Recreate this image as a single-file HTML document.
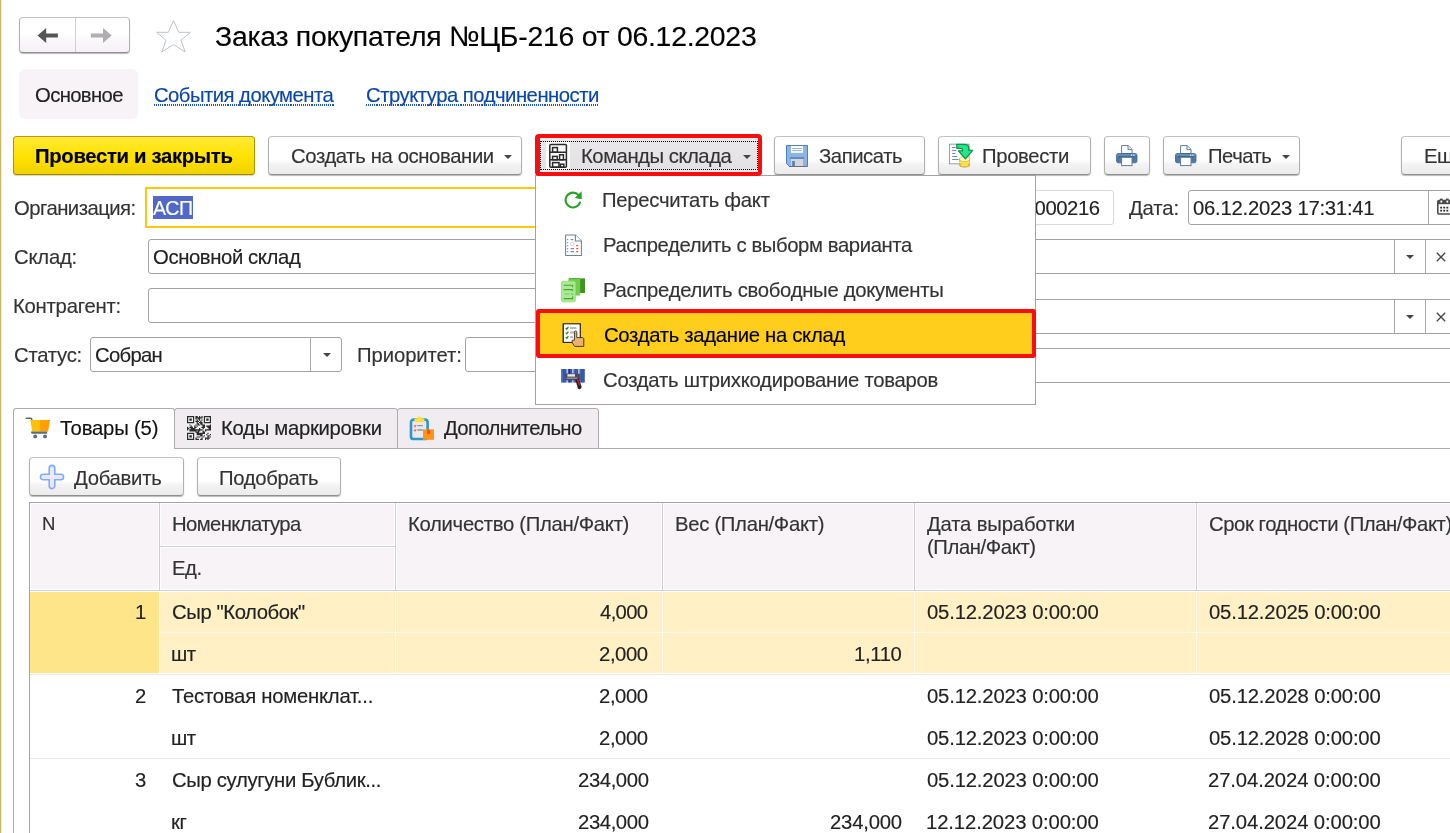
<!DOCTYPE html>
<html lang="ru">
<head>
<meta charset="utf-8">
<title>Заказ покупателя</title>
<style>
*{box-sizing:border-box;margin:0;padding:0}
html,body{width:1450px;height:833px;overflow:hidden;background:#fff}
body{font-family:"Liberation Sans",sans-serif;font-size:20.3px;color:#333;position:relative}
.abs{position:absolute}
.t{position:absolute;white-space:nowrap;line-height:24px;will-change:transform;-webkit-text-stroke:0.15px}
.btn{position:absolute;border:1px solid #b0b0b0;border-top-color:#c2c2c2;border-bottom-color:#8f8f8f;border-radius:4px;background:linear-gradient(#fff 0%,#fff 60%,#faf9fa 69%,#f5f3f5 71%,#ececec 100%);box-shadow:0 1px 1px rgba(0,0,0,.28);height:39px}
.inp{position:absolute;border:1px solid #a3a1a5;border-radius:3px;background:#fff}
.arr{position:absolute;width:0;height:0;border-left:4.2px solid transparent;border-right:4.2px solid transparent;border-top:4.8px solid #444}
.vl{position:absolute;width:1px;background:#a9a7ab}
</style>
</head>
<body>
<div class="abs" style="left:0;top:0;width:1px;height:833px;background:#c8b762"></div>
<div class="abs" style="left:1px;top:0;width:1px;height:833px;background:#f3eedb"></div>
<div class="btn" style="left:19px;top:17px;width:111px;height:36px;background:linear-gradient(#fff 0%,#fff 48%,#fbf9fb 60%,#f4f2f4 100%)"></div>
<div class="abs" style="left:75px;top:18px;width:1px;height:34px;background:#d0d0d0"></div>
<svg class="abs" style="left:36px;top:26px" width="24" height="20" viewBox="0 0 24 20"><path d="M1.5 9.5 L10.2 2 L10.2 7.5 L21.9 7.5 L21.9 11.5 L10.2 11.5 L10.2 17 Z" fill="#555"/></svg>
<svg class="abs" style="left:88.6px;top:26px" width="24" height="20" viewBox="0 0 24 20"><path d="M22.7 9.5 L14 2 L14 7.5 L1.8 7.5 L1.8 11.5 L14 11.5 L14 17 Z" fill="#b0aeb0"/></svg>
<svg class="abs" style="left:155px;top:19px" width="37" height="36" viewBox="0 0 37 36"><path d="M18.5 1.6 L23.7 13.3 L35.4 13.3 L26 21.3 L30.2 33 L18.5 25.6 L6.8 33 L11 21.3 L1.6 13.3 L13.3 13.3 Z" fill="#fff" stroke="#bcc3cd" stroke-width="1"/></svg>
<div class="t" style="left:215.1px;top:23.96px;letter-spacing:-0.26px;font-size:28.4px;color:#000">Заказ покупателя №ЦБ-216 от 06.12.2023</div>
<div class="abs" style="left:19px;top:69px;width:119px;height:50px;background:#f7f3f7;border-radius:6px"></div>
<div class="t" style="left:34.8px;top:82.67px;letter-spacing:-0.64px;color:#222">Основное</div>
<div class="t" style="left:154px;top:82.67px;letter-spacing:-0.53px;color:#0b47a8">События документа</div>
<div class="abs" style="left:154px;top:104.2px;width:181px;height:1.7px;background:repeating-linear-gradient(90deg,#1a52ae 0,#1a52ae 1.1px,transparent 1.1px,transparent 2.1px)"></div>
<div class="t" style="left:366px;top:82.67px;letter-spacing:-0.5px;color:#0b47a8">Структура подчиненности</div>
<div class="abs" style="left:366px;top:104.2px;width:233px;height:1.7px;background:repeating-linear-gradient(90deg,#1a52ae 0,#1a52ae 1.1px,transparent 1.1px,transparent 2.1px)"></div>
<div class="btn" style="left:13px;top:136px;width:242px;background:linear-gradient(#ffe938 0%,#ffe516 30%,#ffe200 55%,#f8da00 75%,#f1d300 100%);border-color:#ad9600;border-top-color:#b8a000;border-bottom-color:#9c8600;border-radius:3.5px;box-shadow:0 1px 1px rgba(90,80,0,.25)"></div>
<div class="t" style="left:34.5px;top:144.17px;letter-spacing:-0.32px;color:#000;font-weight:bold">Провести и закрыть</div>
<div class="btn" style="left:268px;top:136px;width:254px"></div>
<div class="t" style="left:290.6px;top:144.17px;letter-spacing:-0.38px">Создать на основании</div>
<div class="arr" style="left:503.5px;top:154.5px"></div>
<div class="abs" style="z-index:3;left:535px;top:133.6px;width:227px;height:42.2px;border:4px solid #fb0d0d;border-bottom-width:4.4px;border-left-width:5px;border-radius:4px;background:#e9eaec"></div>
<div class="abs" style="z-index:3;left:540px;top:140.8px;width:218px;height:29.4px;border:1.5px dotted #000;background:linear-gradient(#e9e7e9,#e3e1e3)"></div>
<div class="abs" style="z-index:3;left:546px;top:142px;width:24px;height:27px;background:#fbfbfb"></div>
<svg class="abs" style="z-index:4;left:548px;top:143px" width="20" height="26" viewBox="0 0 20 26"><g fill="none" stroke="#2b2b2b" stroke-width="1.5"><rect x="1.8" y="1.6" width="16.6" height="22.6" rx="1"/><path d="M1.8 9.2h16.6M1.8 16.8h16.6"/><rect x="4.6" y="4.6" width="4.8" height="4.6"/><rect x="4.6" y="13.4" width="4.6" height="3.4"/><rect x="11.6" y="11.8" width="3.8" height="5"/><rect x="4.6" y="19.6" width="6.4" height="4.6"/><rect x="12.4" y="21.2" width="3.4" height="3"/></g></svg>
<div class="t" style="left:580.7px;top:144.17px;letter-spacing:-0.48px;z-index:4">Команды склада</div>
<div class="arr" style="z-index:4;left:743px;top:155px"></div>
<div class="btn" style="left:774px;top:136px;width:151px"></div>
<div class="t" style="left:819px;top:144.17px;letter-spacing:-0.43px">Записать</div>
<svg class="abs" style="left:786px;top:145px" width="22" height="22" viewBox="0 0 22 22"><path d="M0.5 0.5h21v21h-18l-3-3z" fill="#8db4e3" stroke="#4f7fbd" stroke-width="1"/><rect x="5" y="1" width="12" height="6.8" fill="#fff"/><path d="M6.3 3.5h9.4M6.3 5.6h9.4" stroke="#8aa8cc" stroke-width="0.9"/><rect x="4" y="12" width="14" height="2" fill="#5f8cc4"/><rect x="5" y="14" width="12" height="7" fill="#d3d6d6"/><rect x="6.2" y="16" width="2.6" height="5" fill="#4f7fbd"/><path d="M3 21.5h18" stroke="#6b6b6b" stroke-width="0.8"/></svg>
<div class="btn" style="left:938px;top:136px;width:153px"></div>
<div class="t" style="left:982.4px;top:144.17px;letter-spacing:-0.34px">Провести</div>
<svg class="abs" style="left:948px;top:143px" width="27" height="26" viewBox="0 0 27 26"><rect x="1.5" y="1.2" width="19.5" height="19.6" fill="#fff" stroke="#8da0bd" stroke-width="1"/><path d="M4.2 4.5h3.6M4.2 7.5h4.2M4.2 10.5h3.2M4.2 13.5h5M4.2 16.5h6.4" stroke="#6f8ab8" stroke-width="1"/><ellipse cx="16.6" cy="22" rx="5.4" ry="2.6" fill="#c99a12"/><rect x="11.2" y="16" width="10.8" height="6" fill="#e3b21c"/><ellipse cx="16.6" cy="19.2" rx="5.4" ry="2.2" fill="#f8e24a"/><ellipse cx="16.6" cy="22.2" rx="4.2" ry="1.3" fill="#f8e24a"/><ellipse cx="16.6" cy="16" rx="5.4" ry="2.6" fill="#fff6c8" stroke="#d8aa18" stroke-width="0.6"/><path d="M8.8 1.4H16.4C19.4 1.4 20.8 3 20.8 5.4V7.4H24.6L17.4 15.8L10.4 7.9H14.4V6.9C14.4 5.8 13.9 5.3 12.8 5.3H8.8Z" fill="#20e88a" stroke="#149448" stroke-width="1.3" stroke-linejoin="round"/></svg>
<div class="btn" style="left:1104px;top:136px;width:46px"></div>
<svg class="abs" style="left:1116px;top:145px" width="22" height="22" viewBox="0 0 22 22"><path d="M5.6 8.5V0.6h6.6l3.8 3.8v4.1z" fill="#fff" stroke="#5f7c9c" stroke-width="1"/><path d="M12 0.8v3.8h3.8" fill="#e9eef4" stroke="#5f7c9c" stroke-width="1"/><rect x="0.5" y="8.5" width="20.5" height="9.3" rx="1.8" fill="#5079a3" stroke="#3f6690" stroke-width="0.8"/><rect x="1" y="8.9" width="19.5" height="2.4" rx="1.2" fill="#5e8db8"/><rect x="3" y="11.4" width="15.5" height="0.9" fill="#34506e"/><rect x="5.6" y="12.3" width="10.4" height="8.3" fill="#fff" stroke="#5f7c9c" stroke-width="1"/><rect x="15" y="9.6" width="1.3" height="1.1" fill="#fff"/><rect x="17.1" y="9.6" width="1.3" height="1.1" fill="#fff"/></svg>
<div class="btn" style="left:1163px;top:136px;width:137px"></div>
<div class="t" style="left:1207.6px;top:144.17px;letter-spacing:-0.52px">Печать</div>
<div class="arr" style="left:1281.5px;top:154.8px"></div>
<svg class="abs" style="left:1175px;top:145px" width="22" height="22" viewBox="0 0 22 22"><path d="M5.6 8.5V0.6h6.6l3.8 3.8v4.1z" fill="#fff" stroke="#5f7c9c" stroke-width="1"/><path d="M12 0.8v3.8h3.8" fill="#e9eef4" stroke="#5f7c9c" stroke-width="1"/><rect x="0.5" y="8.5" width="20.5" height="9.3" rx="1.8" fill="#5079a3" stroke="#3f6690" stroke-width="0.8"/><rect x="1" y="8.9" width="19.5" height="2.4" rx="1.2" fill="#5e8db8"/><rect x="3" y="11.4" width="15.5" height="0.9" fill="#34506e"/><rect x="5.6" y="12.3" width="10.4" height="8.3" fill="#fff" stroke="#5f7c9c" stroke-width="1"/><rect x="15" y="9.6" width="1.3" height="1.1" fill="#fff"/><rect x="17.1" y="9.6" width="1.3" height="1.1" fill="#fff"/></svg>
<div class="btn" style="left:1401px;top:136px;width:60px"></div>
<div class="t" style="left:1423.6px;top:144.17px;letter-spacing:-0.42px">Еще</div>
<div class="t" style="left:13.6px;top:195.87px;letter-spacing:-0.53px">Организация:</div>
<div class="inp" style="left:145px;top:187px;width:600px;height:41px;border:2px solid #ffc70c;border-radius:0"></div>
<div class="abs" style="left:153px;top:196px;width:40px;height:23px;background:#5068c8"></div>
<div class="t" style="left:153.2px;top:196.41px;letter-spacing:-0.42px;font-size:19.6px;color:#fff">АСП</div>
<div class="inp" style="left:960px;top:190px;width:154px;height:35px;border-color:#d9d9d9"></div>
<div class="t" style="left:978.7px;top:195.87px;letter-spacing:-0.42px;color:#222">ЦБ-00000216</div>
<div class="t" style="left:1129.2px;top:195.87px;letter-spacing:-0.12px">Дата:</div>
<div class="inp" style="left:1188px;top:190px;width:280px;height:35px"></div>
<div class="vl" style="left:1428px;top:191px;height:33px"></div>
<div class="t" style="left:1193.2px;top:195.87px;letter-spacing:-0.25px;color:#222">06.12.2023 17:31:41</div>
<svg class="abs" style="left:1437px;top:198px" width="17" height="18" viewBox="0 0 17 18"><rect x="0.8" y="2.6" width="15.4" height="13.4" rx="1.2" fill="#fff" stroke="#4b4b4b" stroke-width="1.6"/><rect x="0.8" y="2.6" width="15.4" height="3.6" fill="#4b4b4b"/><rect x="2.8" y="0.6" width="3" height="4.6" rx="1" fill="#4b4b4b"/><rect x="8.8" y="0.6" width="3" height="4.6" rx="1" fill="#4b4b4b"/><rect x="3.5" y="2.6" width="1.7" height="2" fill="#fff"/><rect x="9.5" y="2.6" width="1.7" height="2" fill="#fff"/><path d="M3.2 9.6h1.9M6.3 9.6h1.9M9.4 9.6h1.9M3.2 12.6h1.9M6.3 12.6h1.9M9.4 12.6h1.9" stroke="#2e2e2e" stroke-width="1.8"/></svg>
<div class="t" style="left:13.6px;top:245.37px;letter-spacing:-0.22px">Склад:</div>
<div class="inp" style="left:148px;top:239px;width:1320px;height:35px"></div>
<div class="vl" style="left:1394px;top:240px;height:33px"></div>
<div class="vl" style="left:1425px;top:240px;height:33px"></div>
<div class="arr" style="left:1405.5px;top:254.5px"></div>
<svg class="abs" style="left:1436px;top:252px" width="10" height="10" viewBox="0 0 10 10"><path d="M0.8 0.8L9.2 9.2M9.2 0.8L0.8 9.2" stroke="#4a4a4a" stroke-width="1.4"/></svg>
<div class="t" style="left:12.6px;top:294.37px;letter-spacing:-0.24px">Контрагент:</div>
<div class="inp" style="left:148px;top:288px;width:600px;height:35px"></div>
<div class="inp" style="left:1000px;top:299px;width:468px;height:35px"></div>
<div class="vl" style="left:1394px;top:300px;height:33px"></div>
<div class="vl" style="left:1425px;top:300px;height:33px"></div>
<div class="arr" style="left:1405.5px;top:314.5px"></div>
<svg class="abs" style="left:1436px;top:312px" width="10" height="10" viewBox="0 0 10 10"><path d="M0.8 0.8L9.2 9.2M9.2 0.8L0.8 9.2" stroke="#4a4a4a" stroke-width="1.4"/></svg>
<div class="inp" style="left:1000px;top:348px;width:600px;height:35px"></div>
<div class="t" style="left:153.4px;top:245.37px;letter-spacing:-0.39px;color:#222">Основной склад</div>
<div class="t" style="left:13.6px;top:343.37px;letter-spacing:-0.25px">Статус:</div>
<div class="inp" style="left:90px;top:337px;width:252px;height:35px"></div>
<div class="vl" style="left:310px;top:338px;height:33px"></div>
<div class="arr" style="left:322.5px;top:352.5px"></div>
<div class="t" style="left:95.4px;top:343.37px;letter-spacing:-0.7px;color:#222">Собран</div>
<div class="t" style="left:356.6px;top:343.37px;letter-spacing:-0.08px">Приоритет:</div>
<div class="inp" style="left:465px;top:337px;width:300px;height:35px"></div>
<div class="abs" style="left:13px;top:448px;width:1440px;height:1px;background:#aeaaae"></div>
<div class="abs" style="left:174px;top:408px;width:224px;height:41px;background:#f0ecf0;border:1px solid #aeaaae;border-radius:3px 3px 0 0"></div>
<div class="abs" style="left:397px;top:408px;width:202px;height:41px;background:#f0ecf0;border:1px solid #aeaaae;border-radius:3px 3px 0 0"></div>
<div class="abs" style="left:13px;top:408px;width:162px;height:41px;background:#fff;border:1px solid #aeaaae;border-bottom:none;border-radius:3px 3px 0 0"></div>
<div class="abs" style="left:13px;top:448px;width:1px;height:400px;background:#aeaaae"></div>
<svg class="abs" style="left:25px;top:416px" width="27" height="24" viewBox="0 0 27 24"><path d="M1.2 2.2h4.6c0.6 0 0.9 0.3 0.9 0.9v2" fill="none" stroke="#5c6b75" stroke-width="1.5" stroke-linecap="round"/><path d="M5.2 4h9.3v11.6H7.2z" fill="#ffc107"/><path d="M14.4 4h10.7l-2 11.6h-8.7z" fill="#ffa000"/><path d="M6 15.6h16.2v2.2H7.2c-0.8 0-1.2-0.6-1.2-2.2z" fill="#5c6b75"/><circle cx="10.2" cy="20.4" r="1.9" fill="#5c6b75"/><circle cx="20" cy="20.4" r="1.9" fill="#5c6b75"/></svg>
<div class="t" style="left:60.1px;top:416.37px;letter-spacing:-0.2px;color:#111">Товары (5)</div>
<svg class="abs" style="left:187px;top:416px" width="24" height="24" viewBox="0 0 24 24"><rect width="24" height="24" fill="#f4f2f4"/><path d="M0.00 0.00h1.20v1.20h-1.20zM0.00 1.20h1.20v1.20h-1.20zM0.00 2.40h1.20v1.20h-1.20zM0.00 3.60h1.20v1.20h-1.20zM0.00 4.80h1.20v1.20h-1.20zM0.00 6.00h1.20v1.20h-1.20zM0.00 10.80h1.20v1.20h-1.20zM0.00 12.00h1.20v1.20h-1.20zM0.00 13.20h1.20v1.20h-1.20zM0.00 16.80h1.20v1.20h-1.20zM0.00 18.00h1.20v1.20h-1.20zM0.00 19.20h1.20v1.20h-1.20zM0.00 20.40h1.20v1.20h-1.20zM0.00 21.60h1.20v1.20h-1.20zM0.00 22.80h1.20v1.20h-1.20zM1.20 0.00h1.20v1.20h-1.20zM1.20 6.00h1.20v1.20h-1.20zM1.20 12.00h1.20v1.20h-1.20zM1.20 16.80h1.20v1.20h-1.20zM1.20 22.80h1.20v1.20h-1.20zM2.40 0.00h1.20v1.20h-1.20zM2.40 2.40h1.20v1.20h-1.20zM2.40 3.60h1.20v1.20h-1.20zM2.40 6.00h1.20v1.20h-1.20zM2.40 8.40h1.20v1.20h-1.20zM2.40 10.80h1.20v1.20h-1.20zM2.40 13.20h1.20v1.20h-1.20zM2.40 14.40h1.20v1.20h-1.20zM2.40 16.80h1.20v1.20h-1.20zM2.40 19.20h1.20v1.20h-1.20zM2.40 20.40h1.20v1.20h-1.20zM2.40 22.80h1.20v1.20h-1.20zM3.60 0.00h1.20v1.20h-1.20zM3.60 2.40h1.20v1.20h-1.20zM3.60 3.60h1.20v1.20h-1.20zM3.60 6.00h1.20v1.20h-1.20zM3.60 9.60h1.20v1.20h-1.20zM3.60 10.80h1.20v1.20h-1.20zM3.60 12.00h1.20v1.20h-1.20zM3.60 13.20h1.20v1.20h-1.20zM3.60 14.40h1.20v1.20h-1.20zM3.60 16.80h1.20v1.20h-1.20zM3.60 19.20h1.20v1.20h-1.20zM3.60 20.40h1.20v1.20h-1.20zM3.60 22.80h1.20v1.20h-1.20zM4.80 0.00h1.20v1.20h-1.20zM4.80 6.00h1.20v1.20h-1.20zM4.80 10.80h1.20v1.20h-1.20zM4.80 12.00h1.20v1.20h-1.20zM4.80 13.20h1.20v1.20h-1.20zM4.80 14.40h1.20v1.20h-1.20zM4.80 16.80h1.20v1.20h-1.20zM4.80 22.80h1.20v1.20h-1.20zM6.00 0.00h1.20v1.20h-1.20zM6.00 1.20h1.20v1.20h-1.20zM6.00 2.40h1.20v1.20h-1.20zM6.00 3.60h1.20v1.20h-1.20zM6.00 4.80h1.20v1.20h-1.20zM6.00 6.00h1.20v1.20h-1.20zM6.00 12.00h1.20v1.20h-1.20zM6.00 13.20h1.20v1.20h-1.20zM6.00 14.40h1.20v1.20h-1.20zM6.00 16.80h1.20v1.20h-1.20zM6.00 18.00h1.20v1.20h-1.20zM6.00 19.20h1.20v1.20h-1.20zM6.00 20.40h1.20v1.20h-1.20zM6.00 21.60h1.20v1.20h-1.20zM6.00 22.80h1.20v1.20h-1.20zM7.20 9.60h1.20v1.20h-1.20zM7.20 10.80h1.20v1.20h-1.20zM7.20 12.00h1.20v1.20h-1.20zM7.20 13.20h1.20v1.20h-1.20zM7.20 14.40h1.20v1.20h-1.20zM8.40 0.00h1.20v1.20h-1.20zM8.40 1.20h1.20v1.20h-1.20zM8.40 2.40h1.20v1.20h-1.20zM8.40 4.80h1.20v1.20h-1.20zM8.40 8.40h1.20v1.20h-1.20zM8.40 10.80h1.20v1.20h-1.20zM8.40 13.20h1.20v1.20h-1.20zM8.40 14.40h1.20v1.20h-1.20zM8.40 15.60h1.20v1.20h-1.20zM8.40 21.60h1.20v1.20h-1.20zM8.40 22.80h1.20v1.20h-1.20zM9.60 0.00h1.20v1.20h-1.20zM9.60 1.20h1.20v1.20h-1.20zM9.60 3.60h1.20v1.20h-1.20zM9.60 4.80h1.20v1.20h-1.20zM9.60 6.00h1.20v1.20h-1.20zM9.60 7.20h1.20v1.20h-1.20zM9.60 9.60h1.20v1.20h-1.20zM9.60 13.20h1.20v1.20h-1.20zM9.60 15.60h1.20v1.20h-1.20zM9.60 16.80h1.20v1.20h-1.20zM9.60 18.00h1.20v1.20h-1.20zM9.60 20.40h1.20v1.20h-1.20zM9.60 22.80h1.20v1.20h-1.20zM10.80 1.20h1.20v1.20h-1.20zM10.80 2.40h1.20v1.20h-1.20zM10.80 4.80h1.20v1.20h-1.20zM10.80 7.20h1.20v1.20h-1.20zM10.80 8.40h1.20v1.20h-1.20zM10.80 13.20h1.20v1.20h-1.20zM10.80 14.40h1.20v1.20h-1.20zM10.80 15.60h1.20v1.20h-1.20zM10.80 16.80h1.20v1.20h-1.20zM10.80 18.00h1.20v1.20h-1.20zM10.80 20.40h1.20v1.20h-1.20zM10.80 22.80h1.20v1.20h-1.20zM12.00 0.00h1.20v1.20h-1.20zM12.00 1.20h1.20v1.20h-1.20zM12.00 2.40h1.20v1.20h-1.20zM12.00 3.60h1.20v1.20h-1.20zM12.00 6.00h1.20v1.20h-1.20zM12.00 8.40h1.20v1.20h-1.20zM12.00 12.00h1.20v1.20h-1.20zM12.00 13.20h1.20v1.20h-1.20zM12.00 14.40h1.20v1.20h-1.20zM12.00 16.80h1.20v1.20h-1.20zM12.00 18.00h1.20v1.20h-1.20zM12.00 20.40h1.20v1.20h-1.20zM13.20 1.20h1.20v1.20h-1.20zM13.20 4.80h1.20v1.20h-1.20zM13.20 6.00h1.20v1.20h-1.20zM13.20 7.20h1.20v1.20h-1.20zM13.20 13.20h1.20v1.20h-1.20zM13.20 16.80h1.20v1.20h-1.20zM13.20 18.00h1.20v1.20h-1.20zM13.20 19.20h1.20v1.20h-1.20zM13.20 22.80h1.20v1.20h-1.20zM14.40 0.00h1.20v1.20h-1.20zM14.40 1.20h1.20v1.20h-1.20zM14.40 3.60h1.20v1.20h-1.20zM14.40 6.00h1.20v1.20h-1.20zM14.40 7.20h1.20v1.20h-1.20zM14.40 8.40h1.20v1.20h-1.20zM14.40 10.80h1.20v1.20h-1.20zM14.40 13.20h1.20v1.20h-1.20zM14.40 16.80h1.20v1.20h-1.20zM14.40 18.00h1.20v1.20h-1.20zM14.40 19.20h1.20v1.20h-1.20zM14.40 21.60h1.20v1.20h-1.20zM14.40 22.80h1.20v1.20h-1.20zM15.60 8.40h1.20v1.20h-1.20zM15.60 9.60h1.20v1.20h-1.20zM15.60 10.80h1.20v1.20h-1.20zM15.60 12.00h1.20v1.20h-1.20zM15.60 14.40h1.20v1.20h-1.20zM15.60 15.60h1.20v1.20h-1.20zM15.60 16.80h1.20v1.20h-1.20zM15.60 20.40h1.20v1.20h-1.20zM16.80 0.00h1.20v1.20h-1.20zM16.80 1.20h1.20v1.20h-1.20zM16.80 2.40h1.20v1.20h-1.20zM16.80 3.60h1.20v1.20h-1.20zM16.80 4.80h1.20v1.20h-1.20zM16.80 6.00h1.20v1.20h-1.20zM16.80 8.40h1.20v1.20h-1.20zM16.80 9.60h1.20v1.20h-1.20zM16.80 10.80h1.20v1.20h-1.20zM16.80 15.60h1.20v1.20h-1.20zM16.80 16.80h1.20v1.20h-1.20zM16.80 19.20h1.20v1.20h-1.20zM18.00 0.00h1.20v1.20h-1.20zM18.00 6.00h1.20v1.20h-1.20zM18.00 13.20h1.20v1.20h-1.20zM18.00 14.40h1.20v1.20h-1.20zM18.00 21.60h1.20v1.20h-1.20zM18.00 22.80h1.20v1.20h-1.20zM19.20 0.00h1.20v1.20h-1.20zM19.20 2.40h1.20v1.20h-1.20zM19.20 3.60h1.20v1.20h-1.20zM19.20 6.00h1.20v1.20h-1.20zM19.20 9.60h1.20v1.20h-1.20zM19.20 13.20h1.20v1.20h-1.20zM19.20 18.00h1.20v1.20h-1.20zM19.20 21.60h1.20v1.20h-1.20zM20.40 0.00h1.20v1.20h-1.20zM20.40 2.40h1.20v1.20h-1.20zM20.40 3.60h1.20v1.20h-1.20zM20.40 6.00h1.20v1.20h-1.20zM20.40 9.60h1.20v1.20h-1.20zM20.40 10.80h1.20v1.20h-1.20zM20.40 13.20h1.20v1.20h-1.20zM20.40 16.80h1.20v1.20h-1.20zM20.40 19.20h1.20v1.20h-1.20zM20.40 20.40h1.20v1.20h-1.20zM20.40 21.60h1.20v1.20h-1.20zM20.40 22.80h1.20v1.20h-1.20zM21.60 0.00h1.20v1.20h-1.20zM21.60 6.00h1.20v1.20h-1.20zM21.60 9.60h1.20v1.20h-1.20zM21.60 10.80h1.20v1.20h-1.20zM21.60 12.00h1.20v1.20h-1.20zM21.60 13.20h1.20v1.20h-1.20zM21.60 19.20h1.20v1.20h-1.20zM21.60 21.60h1.20v1.20h-1.20zM22.80 0.00h1.20v1.20h-1.20zM22.80 1.20h1.20v1.20h-1.20zM22.80 2.40h1.20v1.20h-1.20zM22.80 3.60h1.20v1.20h-1.20zM22.80 4.80h1.20v1.20h-1.20zM22.80 6.00h1.20v1.20h-1.20zM22.80 8.40h1.20v1.20h-1.20zM22.80 9.60h1.20v1.20h-1.20zM22.80 10.80h1.20v1.20h-1.20zM22.80 12.00h1.20v1.20h-1.20zM22.80 13.20h1.20v1.20h-1.20zM22.80 18.00h1.20v1.20h-1.20zM22.80 20.40h1.20v1.20h-1.20z" fill="#2a2a2a"/></svg>
<div class="t" style="left:221.4px;top:416.37px;letter-spacing:-0.28px;color:#222">Коды маркировки</div>
<svg class="abs" style="left:409px;top:415px" width="26" height="26" viewBox="0 0 26 26"><rect x="2" y="4.6" width="16.6" height="19.4" rx="2.6" fill="#e9e9ee" stroke="#2f96ca" stroke-width="2.6"/><path d="M5.4 7.2V4.4c0-0.5 0.3-0.8 0.8-0.8h1.9c0.2-1.5 1.1-2.4 2.3-2.4s2.1 0.9 2.3 2.4h1.9c0.5 0 0.8 0.3 0.8 0.8v2.8z" fill="#ffe13e"/><path d="M5 10.6l1 1 1.2-1.6M5 15l1 1 1.2-1.6" stroke="#ff5a4a" stroke-width="1.1" fill="none"/><path d="M8.4 10.6h5.4M8.4 15h5.4" stroke="#8c93a8" stroke-width="1.3"/><rect x="14" y="14.4" width="11" height="10.4" fill="#ff9518"/><rect x="18" y="14.8" width="3.2" height="4" fill="#ff4a1c"/></svg>
<div class="t" style="left:443.8px;top:416.37px;letter-spacing:-0.65px;color:#222">Дополнительно</div>
<div class="btn" style="left:29px;top:457px;width:155px;height:39px"></div>
<div class="t" style="left:73.8px;top:465.57px;letter-spacing:-0.27px">Добавить</div>
<svg class="abs" style="left:39px;top:464px" width="26" height="26" viewBox="0 0 26 26"><path d="M10.2 4.2a2.8 2.8 0 0 1 5.6 0V10.2H21.8a2.8 2.8 0 0 1 0 5.6H15.8V21.8a2.8 2.8 0 0 1-5.6 0V15.8H4.2a2.8 2.8 0 0 1 0-5.6H10.2z" fill="#e9e9f8" stroke="#7dabff" stroke-width="1.6"/></svg>
<div class="btn" style="left:197px;top:457px;width:144px;height:39px"></div>
<div class="t" style="left:218.5px;top:465.57px;letter-spacing:-0.31px">Подобрать</div>
<div class="abs" style="left:29px;top:502px;width:1430px;height:1px;background:#a6a3a7"></div>
<div class="abs" style="left:29px;top:502px;width:1px;height:340px;background:#a6a3a7"></div>
<div class="abs" style="left:31px;top:504px;width:127px;height:85px;background:#f7f3f7"></div>
<div class="abs" style="left:161px;top:504px;width:233px;height:41px;background:#f7f3f7"></div>
<div class="abs" style="left:161px;top:548px;width:233px;height:41px;background:#f7f3f7"></div>
<div class="abs" style="left:160px;top:546px;width:235px;height:1px;background:#d0d0d0"></div>
<div class="abs" style="left:397px;top:504px;width:264px;height:85px;background:#f7f3f7"></div>
<div class="abs" style="left:664px;top:504px;width:249px;height:85px;background:#f7f3f7"></div>
<div class="abs" style="left:916px;top:504px;width:279px;height:85px;background:#f7f3f7"></div>
<div class="abs" style="left:1198px;top:504px;width:271px;height:85px;background:#f7f3f7"></div>
<div class="abs" style="left:159px;top:503px;width:1px;height:88px;background:#d0d0d0"></div>
<div class="abs" style="left:395px;top:503px;width:1px;height:88px;background:#d0d0d0"></div>
<div class="abs" style="left:662px;top:503px;width:1px;height:88px;background:#d0d0d0"></div>
<div class="abs" style="left:914px;top:503px;width:1px;height:88px;background:#d0d0d0"></div>
<div class="abs" style="left:1196px;top:503px;width:1px;height:88px;background:#d0d0d0"></div>
<div class="abs" style="left:30px;top:590px;width:1430px;height:1px;background:#d0d0d0"></div>
<div class="t" style="left:41.6px;top:512.46px;letter-spacing:-0.42px;font-size:18.6px">N</div>
<div class="t" style="left:171.6px;top:511.87px;letter-spacing:-0.62px">Номенклатура</div>
<div class="t" style="left:172.1px;top:556.37px;letter-spacing:-0.42px">Ед.</div>
<div class="t" style="left:408.3px;top:511.87px;letter-spacing:-0.3px">Количество (План/Факт)</div>
<div class="t" style="left:675.2px;top:511.87px;letter-spacing:-0.3px">Вес (План/Факт)</div>
<div class="t" style="left:927.2px;top:511.87px;letter-spacing:-0.17px">Дата выработки</div>
<div class="t" style="left:926.6px;top:534.87px;letter-spacing:-0.41px">(План/Факт)</div>
<div class="t" style="left:1209.3px;top:511.87px;letter-spacing:-0.42px">Срок годности (План/Факт)</div>
<div class="abs" style="left:30px;top:592px;width:1430px;height:81px;background:#fff1c5"></div>
<div class="abs" style="left:30px;top:592px;width:129px;height:81px;background:#ffe589"></div>
<div class="abs" style="left:159px;top:592px;width:1px;height:81px;background:#fffaea"></div>
<div class="abs" style="left:395px;top:592px;width:1px;height:81px;background:#fffaea"></div>
<div class="abs" style="left:662px;top:592px;width:1px;height:81px;background:#fffaea"></div>
<div class="abs" style="left:914px;top:592px;width:1px;height:81px;background:#fffaea"></div>
<div class="abs" style="left:1196px;top:592px;width:1px;height:81px;background:#fffaea"></div>
<div class="abs" style="left:160px;top:632px;width:1300px;height:1px;background:#fffaea"></div>
<div class="abs" style="left:30px;top:674px;width:1430px;height:1px;background:#e8e8ea"></div>
<div class="abs" style="left:30px;top:758px;width:1430px;height:1px;background:#e8e8ea"></div>
<div class="t" style="left:134.6px;top:600.47px;letter-spacing:-0.42px;color:#222">1</div>
<div class="t" style="left:172.4px;top:600.47px;letter-spacing:-0.42px;color:#222">Сыр &quot;Колобок&quot;</div>
<div class="t" style="left:600.4px;top:600.47px;letter-spacing:-0.65px;color:#222">4,000</div>
<div class="t" style="left:927px;top:600.47px;letter-spacing:-0.18px;color:#222">05.12.2023 0:00:00</div>
<div class="t" style="left:1209px;top:600.47px;letter-spacing:-0.18px;color:#222">05.12.2025 0:00:00</div>
<div class="t" style="left:171.4px;top:642.17px;letter-spacing:-0.42px;color:#222">шт</div>
<div class="t" style="left:599.4px;top:642.17px;letter-spacing:-0.4px;color:#222">2,000</div>
<div class="t" style="left:853.8px;top:642.17px;letter-spacing:-0.35px;color:#222">1,110</div>
<div class="t" style="left:134.6px;top:684.07px;letter-spacing:-0.42px;color:#222">2</div>
<div class="t" style="left:172.4px;top:684.07px;letter-spacing:-0.24px;color:#222">Тестовая номенклат...</div>
<div class="t" style="left:599.4px;top:684.07px;letter-spacing:-0.4px;color:#222">2,000</div>
<div class="t" style="left:927px;top:684.07px;letter-spacing:-0.18px;color:#222">05.12.2023 0:00:00</div>
<div class="t" style="left:1209px;top:684.07px;letter-spacing:-0.18px;color:#222">05.12.2028 0:00:00</div>
<div class="t" style="left:171.4px;top:726.07px;letter-spacing:-0.42px;color:#222">шт</div>
<div class="t" style="left:599.4px;top:726.07px;letter-spacing:-0.4px;color:#222">2,000</div>
<div class="t" style="left:927px;top:726.07px;letter-spacing:-0.18px;color:#222">05.12.2023 0:00:00</div>
<div class="t" style="left:1209px;top:726.07px;letter-spacing:-0.18px;color:#222">05.12.2028 0:00:00</div>
<div class="t" style="left:134.6px;top:767.97px;letter-spacing:-0.42px;color:#222">3</div>
<div class="t" style="left:172.4px;top:767.97px;letter-spacing:-0.34px;color:#222">Сыр сулугуни Бублик...</div>
<div class="t" style="left:578.2px;top:767.97px;letter-spacing:-0.4px;color:#222">234,000</div>
<div class="t" style="left:927px;top:767.97px;letter-spacing:-0.18px;color:#222">05.12.2023 0:00:00</div>
<div class="t" style="left:1208px;top:767.97px;letter-spacing:-0.12px;color:#222">27.04.2024 0:00:00</div>
<div class="t" style="left:171.4px;top:809.87px;letter-spacing:-0.42px;color:#222">кг</div>
<div class="t" style="left:578.2px;top:809.87px;letter-spacing:-0.4px;color:#222">234,000</div>
<div class="t" style="left:829.6px;top:809.87px;letter-spacing:-0.2px;color:#222">234,000</div>
<div class="t" style="left:926px;top:809.87px;letter-spacing:-0.12px;color:#222">12.12.2023 0:00:00</div>
<div class="t" style="left:1208px;top:809.87px;letter-spacing:-0.12px;color:#222">27.04.2024 0:00:00</div>
<div class="abs" style="left:535px;top:175px;width:501px;height:230px;background:#fff;border:1px solid #a3a3a3"></div>
<div class="abs" style="left:536px;top:309px;width:500px;height:49px;background:#ffce1c;border:4px solid #fb0d0d;border-radius:3px"></div>
<svg class="abs" style="left:563px;top:190px" width="20" height="20" viewBox="0 0 20 20"><path d="M15.6 5.2A7.4 7.4 0 1 0 17.2 11.6" fill="none" stroke="#27a127" stroke-width="2.05"/><path d="M18.7 1.3v8l-7-1.3z" fill="#27a127"/></svg>
<svg class="abs" style="left:564px;top:234px" width="19" height="23" viewBox="0 0 19 23"><path d="M1.6 0.9h9.8l6 6v14.6H1.6z" fill="#fff" stroke="#6b8299" stroke-width="1.05"/><path d="M11.4 0.9v6h6" fill="#fff" stroke="#6b8299" stroke-width="1.05"/><path d="M3.2 5.6h1M3.2 8.6h1M3.2 11.6h1M3.2 14.6h1M3.2 17.6h1" stroke="#3d8bd0" stroke-width="1.1"/><path d="M6.6 5.6h2.8M6.6 14.6h3.4M6.6 17.6h3.4" stroke="#8a8a8a" stroke-width="1.1"/><circle cx="8" cy="10" r="1.8" fill="none" stroke="#c8c8d0" stroke-width="0.7"/><path d="M12.2 11.6h2M12.2 14.6h2M12.2 17.6h2" stroke="#f05030" stroke-width="1.2"/></svg>
<svg class="abs" style="left:560px;top:277px" width="26" height="26" viewBox="0 0 26 26"><path d="M19 1.6l6-0.4v14.8h-5z" fill="#3f9422"/><path d="M8.4 1.6L19.6 1l0.6 0.6v16.8H8.4z" fill="#74cc4c"/><path d="M9 1.6h10.6" stroke="#52b030" stroke-width="1"/><rect x="1.4" y="4.2" width="14" height="20.6" rx="1.6" fill="#aaea94" stroke="#8edc78" stroke-width="0.8"/><path d="M3.6 8.2h9.6M3.6 12.6h9.6M3.6 21.6h9.6M12.6 8.2v2M12.6 19.6v2" stroke="#4ea432" stroke-width="1.1"/><path d="M11.6 12.6l1 1.6M11.6 16.4l1 1.6" stroke="#4ea432" stroke-width="1"/><path d="M4.6 17h5" stroke="#86cc70" stroke-width="1.2"/></svg>
<svg class="abs" style="left:562px;top:323px" width="23" height="25" viewBox="0 0 23 25"><rect x="1.2" y="0.9" width="17" height="18.4" fill="#f4f4f4" stroke="#1e1e1e" stroke-width="1.3"/><rect x="2" y="1.6" width="15.4" height="17" fill="#fff"/><path d="M8 4h6.4v2H8zM8 8.6h6.4v2H8zM8 13.2h3v2H8z" fill="#b4b8bc"/><path d="M3.8 5l1 1.2 1.6-2.2M3.8 9.6l1 1.2 1.6-2.2M3.8 14.2l1 1.2 1.6-2.2" stroke="#2f8a2a" stroke-width="1.3" fill="none"/><path d="M12.4 9.4c0-1 0.5-1.4 1.2-1.4s1.2 0.4 1.2 1.4v5.2h5.4c1 0 1.6 0.6 1.6 1.6v7.2h-9l-2.6-3.6v-2.6h2.2z" fill="#e9b273" stroke="#3a2a1a" stroke-width="0.9" stroke-linejoin="round"/></svg>
<svg class="abs" style="left:560px;top:368px" width="26" height="24" viewBox="0 0 26 24"><g fill="#3558b4"><rect x="1.2" y="1" width="1.6" height="13.6"/><rect x="3.8" y="1" width="2.8" height="13.6"/><rect x="7.6" y="1" width="1.4" height="13.6"/><rect x="10" y="1" width="2.4" height="13.6"/><rect x="13.4" y="1" width="1.4" height="13.6"/><rect x="15.8" y="1" width="2.6" height="13.6"/><rect x="19.4" y="1" width="1.4" height="13.6"/><rect x="21.8" y="1" width="3" height="13.6"/></g><g fill="#1b2f72"><rect x="2.8" y="1" width="1" height="13.6"/><rect x="9" y="1" width="1" height="13.6"/><rect x="14.8" y="1" width="1" height="13.6"/><rect x="20.8" y="1" width="1" height="13.6"/></g><path d="M5.4 5.4h12.2c1.6 0 2.6 0.8 2.6 2.4v3.2c0 0.8-0.6 1.2-1.4 1.2H6.6c-0.8 0-1.2-0.4-1.2-1.2z" fill="#4a4a52"/><path d="M7.4 6.2h7.6v2.4H7.4z" fill="#e6e6ea"/><path d="M6.6 9.4h10.8v1.6H6.6z" fill="#8a8a94"/><path d="M15.4 11.4l3.4-1 2.6 7.6c0.4 1.2 0 2.4-1.2 3-1 0.4-2 0.2-2.4-0.8z" fill="#2a2226"/><path d="M16.8 11.6l1.4-0.4 2 5.8-1.2 0.6z" fill="#d8202a"/></svg>
<div class="t" style="left:602.3px;top:188.37px;letter-spacing:-0.27px">Пересчитать факт</div>
<div class="t" style="left:603px;top:233.17px;letter-spacing:-0.39px">Распределить с выборм варианта</div>
<div class="t" style="left:603px;top:277.97px;letter-spacing:-0.29px">Распределить свободные документы</div>
<div class="t" style="left:603.8px;top:322.77px;letter-spacing:-0.3px;color:#000">Создать задание на склад</div>
<div class="t" style="left:603.4px;top:367.67px;letter-spacing:-0.26px">Создать штрихкодирование товаров</div>
</body>
</html>
